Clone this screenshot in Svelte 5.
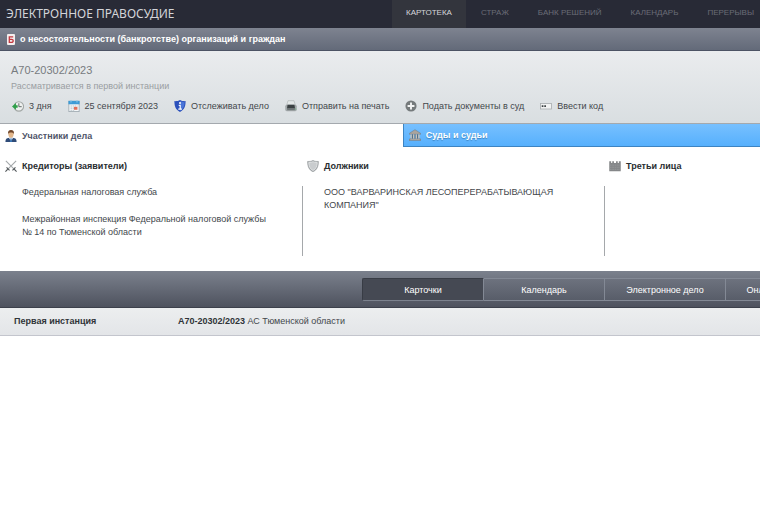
<script>
  const nav = ['КАРТОТЕКА', 'СТРАЖ', 'БАНК РЕШЕНИЙ', 'КАЛЕНДАРЬ', 'ПЕРЕРЫВЫ'];
  const actions = [
    { icon: 'clock', label: '3 дня' },
    { icon: 'calendar', label: '25 сентября 2023' },
    { icon: 'shield', label: 'Отслеживать дело' },
    { icon: 'printer', label: 'Отправить на печать' },
    { icon: 'plus', label: 'Подать документы в суд' },
    { icon: 'code', label: 'Ввести код' }
  ];
  const groups = [
    {
      icon: 'swords',
      title: 'Кредиторы (заявители)',
      items: [
        'Федеральная налоговая служба',
        'Межрайонная инспекция Федеральной налоговой службы № 14 по Тюменской области'
      ]
    },
    {
      icon: 'guard',
      title: 'Должники',
      items: ['ООО "ВАРВАРИНСКАЯ ЛЕСОПЕРЕРАБАТЫВАЮЩАЯ КОМПАНИЯ"']
    },
    { icon: 'tower', title: 'Третьи лица', items: [] }
  ];
  const views = ['Карточки', 'Календарь', 'Электронное дело', 'Онлайн-заседание'];
  let view = $state('Карточки');
</script>

{#snippet icon(name)}
  <svg class="icon" viewBox="0 0 14 14" aria-hidden="true">
    {#if name === 'clock'}
      <circle cx="8" cy="7.5" r="5.5" fill="#eef0ef" stroke="#a3a8a6" stroke-width="1.3" />
      <path d="M8 3.8v4h3.3" fill="none" stroke="#5d6462" stroke-width="1.1" />
      <path d="M0 7.5 4.6 3.5v2.5h2v3h-2v2.5z" fill="#2fa04a" />
    {:else if name === 'calendar'}
      <rect x="1" y="1.5" width="12" height="12" fill="#f4f7f9" stroke="#a0aab2" />
      <rect x=".5" y="1" width="13" height="4" fill="#3d9bd6" />
      <path d="M3.5 0v3M10.5 0v3" stroke="#8fc6e8" stroke-width="1.2" />
      <path d="M3 7h8M3 9.5h5M3 12h5" stroke="#b9c3ca" stroke-width="1.3" stroke-dasharray="1.6 .8" />
      <rect x="7" y="8" width="4" height="3.4" fill="#e0705a" />
    {:else if name === 'shield'}
      <path d="M7 0c2 1.3 4 1.4 6.5 1.3C13.6 7.5 12 11.5 7 14 2 11.5.4 7.5.5 1.3 3 1.4 5 1.3 7 0z" fill="#2b50bb" />
      <path d="M7 1.3c1.8 1 3.5 1.2 5.4 1.2C12.3 7 11 10.5 7 12.7z" fill="#4a75d8" />
      <circle cx="7" cy="3.6" r="1.2" fill="#fff" />
      <path d="M5.5 6.2h1.7v4.3M5 10.7h4.2" fill="none" stroke="#fff" stroke-width="1.4" />
    {:else if name === 'printer'}
      <path d="M3.5.8h7L12 6H2z" fill="#e3e7e7" stroke="#abb1b2" stroke-width=".7" />
      <rect x=".3" y="5.5" width="13.4" height="7.5" rx="1.8" fill="#a2a8aa" />
      <path d="M3 5.5h8l.7 4.5H2.3z" fill="#3b4143" />
      <path d="M2.5 10.3h9v1.6h-9z" fill="#6f7678" />
      <circle cx="12.4" cy="10.5" r=".7" fill="#66b779" />
    {:else if name === 'plus'}
      <circle cx="7" cy="7" r="6.5" fill="#757a7c" />
      <path d="M7 3v8M3 7h8" stroke="#f3f4f4" stroke-width="2.2" />
    {:else if name === 'code'}
      <rect x=".5" y="4" width="13" height="6.5" fill="#f1f2f2" stroke="#aaafb1" />
      <path d="M2 7.2h2M5 7.2h2" stroke="#3e4446" stroke-width="2" />
    {:else if name === 'person'}
      <path d="M.5 14c0-4 1.5-5 6.5-5s6.5 1 6.5 5z" fill="#2f4c78" />
      <path d="M4.5 9h5L7 13z" fill="#f0f3f7" />
      <path d="M6.5 9.5h1l.7 4.5H5.8z" fill="#3675b6" />
      <ellipse cx="7" cy="5" rx="3" ry="4" fill="#e3b78b" />
      <path d="M3.7 5C3 1.5 4.5 0 7 0s4 1.5 3.3 5C9.6 3 8.5 2.8 7 2.8S4.4 3 3.7 5z" fill="#70472b" />
    {:else if name === 'court'}
      <path d="M7 .8 13.5 5v1.2H.5V5zM1.3 11h11.4v1H14v1.5H0V12h1.3z" fill="#aaa49d" stroke="#6c7884" stroke-width=".6" />
      <path d="M2.5 6.3V11M5.5 6.3V11M8.5 6.3V11M11.5 6.3V11" stroke="#c9c2b8" stroke-width="1.7" />
      <path d="M4 6.3V11M7 6.3V11M10 6.3V11" stroke="#50616f" />
    {:else if name === 'swords'}
      <path d="m1 1 10.5 10.5M13 1 2.5 11.5" stroke="#a4a8aa" stroke-width="1.3" />
      <path d="m8.7 12 3.5-3.5M5.3 12 1.8 8.5M11 11l2.5 2.5M3 11 .5 13.5" stroke="#505558" stroke-width="1.3" />
    {:else if name === 'guard'}
      <path d="M7 .5c2 1.2 3.7 1.2 6.3 1.2C13.3 7.5 11.5 11.8 7 13.6 2.5 11.8.7 7.5.7 1.7 3.3 1.7 5 1.7 7 .5z" fill="#a7abae" stroke="#8f9396" stroke-width=".7" />
      <path d="M7 2c1.6.8 3 1 5 1-.2 4.2-1.6 7.7-5 9.3C3.6 10.7 2.2 7.2 2 3c2 0 3.4-.2 5-1z" fill="#c9ccce" stroke="#eceeee" stroke-width=".8" />
    {:else if name === 'tower'}
      <path d="M.3 1.5h2.2v2h1.3v-2h2v2h2.4v-2h2v2h1.3v-2h2.2v11.7H.3z" fill="#858789" />
      <path d="M1 6h12M1 8.5h12M1 11h12" stroke="#9b9d9f" stroke-width=".7" stroke-dasharray="2 .8" />
    {/if}
  </svg>
{/snippet}

<div class="page">
  <header class="top">
    <a class="brand" href="#home">ЭЛЕКТРОННОЕ ПРАВОСУДИЕ</a>
    <nav>
      {#each nav as item, i}
        <a href="#{i}" class:current={i === 0}>{item}</a>
      {/each}
    </nav>
  </header>

  <div class="category">
    <svg class="letter" viewBox="0 0 8 11" aria-hidden="true">
      <rect width="8" height="11" rx="1" fill="#f4eeee" />
      <path d="M6.2 2.8H2.3v5.5h2.2q1.7 0 1.7-1.5T4.5 5.3H2.3" fill="none" stroke="#c43840" stroke-width="1.3" />
    </svg>
    о несостоятельности (банкротстве) организаций и граждан
  </div>

  <section class="case">
    <h1>А70-20302/2023</h1>
    <p>Рассматривается в первой инстанции</p>
    <div class="actions">
      {#each actions as a}
        <button type="button">{@render icon(a.icon)}{a.label}</button>
      {/each}
    </div>
  </section>

  <div class="tabs">
    <button type="button" class="people">{@render icon('person')}Участники дела</button>
    <button type="button" class="courts">{@render icon('court')}Суды и судьи</button>
  </div>

  <section class="groups">
    {#each groups as g}
      <div class="group">
        <h2>{@render icon(g.icon)}{g.title}</h2>
        <ul>
          {#each g.items as item}<li>{item}</li>{/each}
        </ul>
      </div>
    {/each}
  </section>

  <div class="bar">
    <div class="views">
      {#each views as v}
        <button type="button" class:on={view === v} onclick={() => (view = v)}>{v}</button>
      {/each}
    </div>
  </div>

  <div class="instance">
    <strong>Первая инстанция</strong>
    <span><b>А70-20302/2023</b> АС Тюменской области</span>
  </div>
</div>

<style>
  :global(body) {
    margin: 0;
    background: #fff;
  }
  .page {
    overflow: hidden;
    font: 9px/14px 'Liberation Sans', Arial, sans-serif;
    color: #43474b;
  }
  button {
    border: 0;
    padding: 0;
    background: none;
    font: inherit;
    color: inherit;
    white-space: nowrap;
    cursor: pointer;
  }
  a {
    color: inherit;
    text-decoration: none;
  }
  .icon {
    flex: none;
    width: 12px;
    height: 12px;
  }
  .top {
    display: flex;
    justify-content: space-between;
    height: 28px;
    padding-left: 6px;
    background: #282a36;
    white-space: nowrap;
  }
  .brand {
    font: 12px/27px 'Noto Sans', sans-serif;
    color: #d3d4d9;
  }
  nav {
    display: flex;
    gap: 1px;
    font: 8px/26px 'Liberation Sans', Arial, sans-serif;
    color: #6a6c76;
  }
  nav a {
    padding: 0 14px;
  }
  nav a:last-child {
    padding-right: 6px;
  }
  nav .current {
    background: #33353d;
    color: #d5d6da;
  }
  .category {
    display: flex;
    align-items: center;
    gap: 5px;
    box-sizing: border-box;
    height: 23px;
    padding-left: 7px;
    border-bottom: 1px solid #4c5364;
    background: linear-gradient(#7e8390, #636a79);
    color: #fff;
    font-weight: bold;
  }
  .letter {
    width: 8px;
    height: 11px;
  }
  .case {
    padding: 11px 11px 9px;
    background: linear-gradient(#eaecee, #d9dee1);
    border-bottom: 1px solid #a4a9ae;
  }
  h1 {
    margin: 0;
    font: 11px/16px 'Liberation Sans', Arial, sans-serif;
    color: #777b7f;
  }
  .case p {
    margin: 1px 0 6px;
    color: #9a9ea2;
  }
  .actions {
    display: flex;
    gap: 16px;
    padding: 0 0 1px 1px;
  }
  .actions button {
    display: flex;
    align-items: center;
    gap: 5px;
  }
  .tabs {
    display: grid;
    grid-template-columns: 53fr 47fr;
    height: 23px;
  }
  .tabs button {
    display: flex;
    align-items: center;
    gap: 5px;
    padding-left: 5px;
    font-weight: bold;
  }
  .people {
    color: #50556a;
  }
  .tabs .courts {
    border: solid #3d84c2;
    border-width: 0 0 1px 1px;
    background: linear-gradient(#77c0ff, #56b0fd);
    color: #fff;
    text-shadow: 0 1px 1px #3d84c2;
  }
  .groups {
    display: grid;
    grid-template-columns: 302fr 302fr 156fr;
    padding: 12px 0 15px;
  }
  h2 {
    display: flex;
    align-items: center;
    gap: 5px;
    margin: 0 0 13px 5px;
    font: bold 9px/14px 'Liberation Sans', Arial, sans-serif;
    color: #292d30;
  }
  ul {
    box-sizing: border-box;
    min-height: 70px;
    margin: 0;
    padding: 0 30px 0 22px;
    list-style: none;
    line-height: 13px;
  }
  .group + .group ul {
    padding-left: 21px;
    border-left: 1px solid #a5a8ab;
  }
  li {
    margin-bottom: 14px;
  }
  .bar {
    box-sizing: border-box;
    height: 37px;
    padding: 7px 0 0 362px;
    border-bottom: 1px solid #3c404b;
    background: linear-gradient(#7b818d, #4e525e);
    color: #fff;
  }
  .views {
    display: flex;
  }
  .views button {
    box-sizing: border-box;
    flex: none;
    width: 121px;
    height: 23px;
    border: 1px solid #838995;
    border-left-width: 0;
    background: linear-gradient(#6d727e, #585d69);
  }
  .views button:first-child {
    width: 122px;
  }
  .views .on {
    border-color: #383c45 #838995 #7c828e #383c45;
    border-left-width: 1px;
    border-radius: 2px 0 0 2px;
    background: #454953;
  }
  .instance {
    display: flex;
    padding: 6px 14px 7px;
    border-bottom: 1px solid #c3c5cd;
    background: linear-gradient(#eceeef, #e3e5e8);
  }
  .instance strong {
    width: 164px;
  }
  .instance strong,
  .instance b {
    color: #303438;
  }
</style>
